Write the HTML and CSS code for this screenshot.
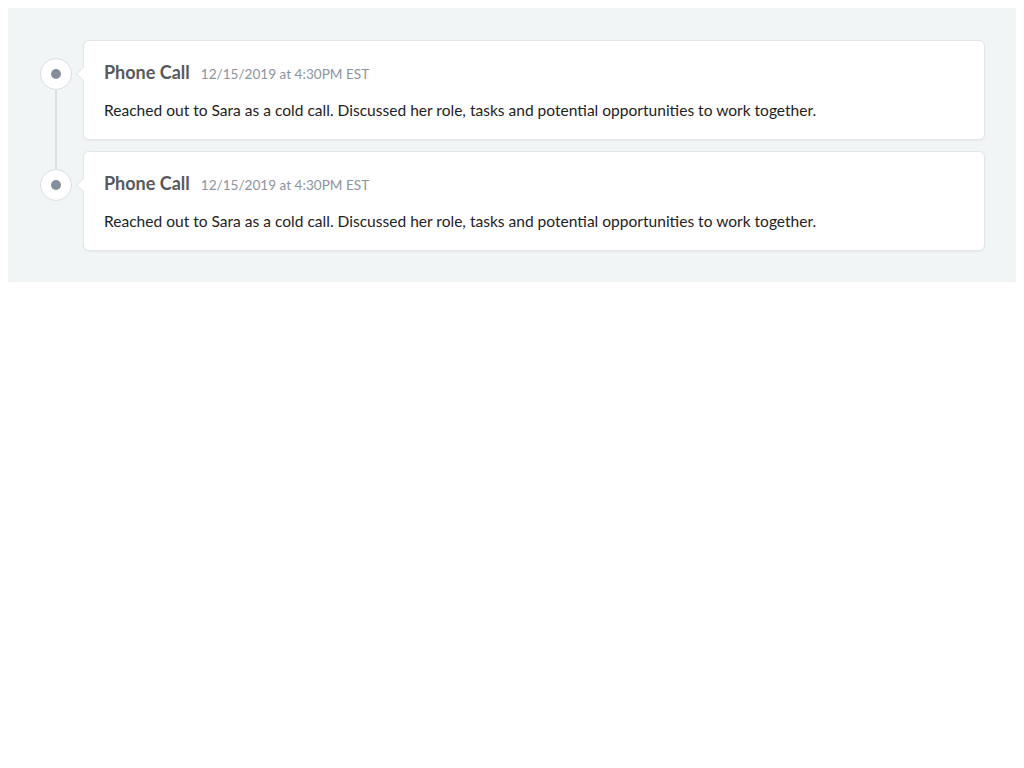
FILE: index.html
```html
<!DOCTYPE html>
<html>
<head>
<meta charset="utf-8">
<link rel="stylesheet" href="styles.css">
</head>
<body>
<div class="timeline">
  <div class="item">
    <div class="marker">
      <div class="seg seg-top"></div>
      <div class="circle"><span class="dot"></span></div>
      <div class="seg seg-bottom"></div>
    </div>
    <div class="card">
      <div class="head"><span class="title">Phone Call</span><span class="date">12/15/2019 at 4:30PM EST</span></div>
      <p class="body">Reached out to Sara as a cold call. Discussed her role, tasks and potential opportunities to work together.</p>
    </div>
  </div>
  <div class="item">
    <div class="marker">
      <div class="seg seg-top"></div>
      <div class="circle"><span class="dot"></span></div>
      <div class="seg seg-bottom"></div>
    </div>
    <div class="card">
      <div class="head"><span class="title">Phone Call</span><span class="date">12/15/2019 at 4:30PM EST</span></div>
      <p class="body">Reached out to Sara as a cold call. Discussed her role, tasks and potential opportunities to work together.</p>
    </div>
  </div>
</div>
</body>
</html>
```
FILE: styles.css
```css
body {
  margin: 8px;
  font-family: Lato, "Liberation Sans", sans-serif;
  background: #fff;
}
.timeline {
  background: #f2f5f5;
  padding: 32px 31px 31px 32px;
}
.item {
  display: flex;
  align-items: stretch;
}
.marker {
  width: 32px;
  display: flex;
  flex-direction: column;
  align-items: center;
  margin-right: 11px;
  flex-shrink: 0;
}
.seg {
  width: 2px;
  background: #dde1e4;
}
.seg-top {
  height: 18px;
}
.seg-bottom {
  flex: 1;
}
.item:first-child .seg-top,
.item:last-child .seg-bottom {
  background: transparent;
}
.circle {
  width: 30px;
  height: 30px;
  border: 1px solid #dadee2;
  border-radius: 50%;
  background: #fff;
  display: flex;
  align-items: center;
  justify-content: center;
  flex-shrink: 0;
}
.dot {
  width: 10px;
  height: 10px;
  border-radius: 50%;
  background: #858f9c;
}
.card {
  flex: 1;
  position: relative;
  background: #fff;
  border: 1px solid #e3e6e8;
  border-radius: 6px;
  box-shadow: 0 1px 2px rgba(0, 0, 0, 0.05);
  padding: 19px 20px 18px;
  margin-bottom: 11px;
}
.item:last-child .card {
  margin-bottom: 0;
}
.card::before {
  content: "";
  position: absolute;
  left: -6px;
  top: 28px;
  width: 9px;
  height: 9px;
  background: #fff;
  border-left: 1px solid #e3e6e8;
  border-bottom: 1px solid #e3e6e8;
  transform: rotate(45deg);
}
.head {
  display: flex;
  align-items: baseline;
  line-height: 24px;
}
.title {
  font-size: 18px;
  font-weight: 700;
  color: #56595e;
  margin-right: 11px;
}
.date {
  font-size: 13.6px;
  color: #8b94a0;
}
.body {
  margin: 13px 0 0;
  font-size: 15.55px;
  line-height: 22px;
  color: #1e2225;
}
```
